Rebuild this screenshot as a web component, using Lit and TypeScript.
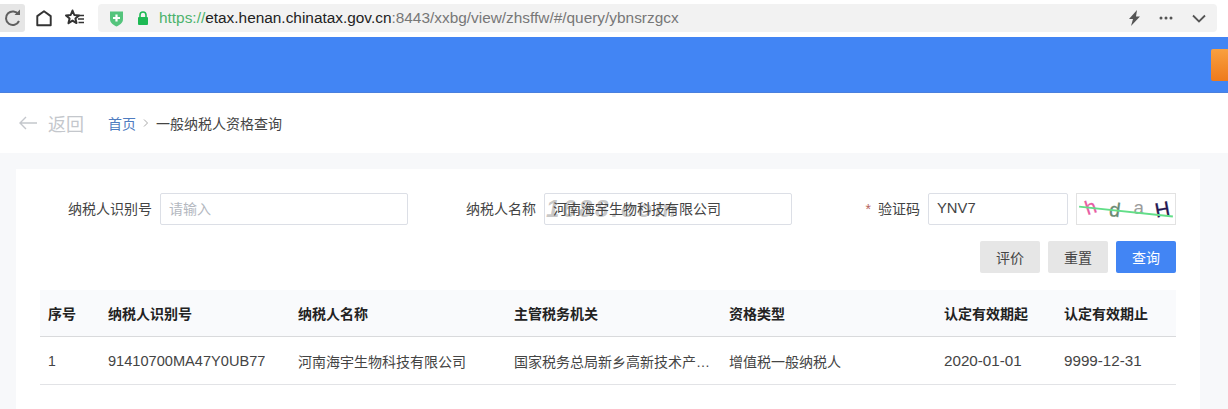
import { LitElement, html, css, svg } from "lit";
import { customElement } from "lit/decorators.js";

const ICON_REFRESH = svg`<path d="M18.500 8.500A6.800 6.800 0 1 0 19 15" fill="none" stroke="#5f5f5f" stroke-width="2"/><path d="M14.500 9h5.500V3.500z" fill="#5f5f5f"/>`;
const ICON_HOME = svg`<path d="M5.500 19.500V10L12.500 5 19.500 10v9.500z" fill="none" stroke="#333" stroke-width="2" stroke-linejoin="round"/>`;
const ICON_STAR = svg`<path d="M9.500 4.500l1.800 4.500 4.700.4-3.600 3.100 1.100 4.600-4-2.500-4 2.500 1.100-4.600L3 9.400l4.700-.4z" fill="none" stroke="#333" stroke-width="2" stroke-linejoin="round"/><path d="M15.500 9.500h5.500M15 13h6M15.500 16.500h5.500" stroke="#333" stroke-width="1.500"/>`;

const COLS = [
  ["序号", "1", ""],
  ["纳税人识别号", "91410700MA47Y0UB77", "id"],
  ["纳税人名称", "河南海宇生物科技有限公司", ""],
  ["主管税务机关", "国家税务总局新乡高新技术产业开发区税务局", ""],
  ["资格类型", "增值税一般纳税人", ""],
  ["认定有效期起", "2020-01-01", "date"],
  ["认定有效期止", "9999-12-31", "date"],
];

@customElement("app-root")
export class AppRoot extends LitElement {
  static styles = css`
    :host { display: block; width: 1228px; height: 409px; overflow: hidden; background: #f7f8fa;
      font-family: "Liberation Sans", "Noto Sans CJK SC", sans-serif; font-size: 14px; color: #333; }
    .chrome { height: 37px; background: #fff; display: flex; align-items: flex-start; padding-top: 4px; box-sizing: border-box; }
    .reload { width: 25px; height: 28px; background: #e6e6e6; border-radius: 0 3px 3px 0; display: flex; align-items: center; justify-content: center; }
    .tool { width: 24px; height: 28px; display: flex; align-items: center; justify-content: center; }
    .home { margin-left: 7px; }
    .star { margin-left: 7px; }
    .url { margin-left: 11px; width: 1119px; height: 28px; background: #f2f2f2; border-radius: 4px; display: flex; align-items: center; box-sizing: border-box; padding-left: 11px; }
    .shield { width: 15px; height: 18px; flex: none; }
    .lock { width: 12px; height: 14px; margin-left: 13px; flex: none; }
    .addr { margin-left: 10px; font-size: 15.400px; white-space: nowrap; color: #777; flex: 1; }
    .addr .s { color: #4cb26c; }
    .addr .d { color: #222; }
    .actions { display: flex; align-items: center; margin-right: 11px; }
    .actions svg { display: block; }
    .bolt { width: 14px; height: 16px; margin-right: 17px; }
    .dots { width: 14px; height: 4px; margin-right: 19px; }
    .chev { width: 14px; height: 9px; }
    .banner { height: 56px; background: #4285f4; display: flex; justify-content: flex-end; align-items: center; box-shadow: inset 0 -1px 0 #4a80de; }
    .orange { width: 17px; height: 32px; background: linear-gradient(#f9a040, #ee7a1c); border-radius: 2px 0 0 2px; }
    .crumbs { height: 60px; background: #fff; display: flex; align-items: center; padding-left: 18px; }
    .back { display: flex; align-items: center; color: #c4c7cc; font-size: 18px; width: 90px; }
    .back svg { width: 20px; height: 14px; margin-right: 10px; flex: none; }
    .home-link { color: #4f7cc0; font-size: 14px; }
    .sep { margin: 0 7px; width: 6px; height: 8px; flex: none; }
    .cur { font-size: 14px; color: #444; }
    .card { background: #fff; margin: 16px 28px 0 16px; padding: 24px 24px 0; height: 240px; box-sizing: border-box; }
    .form { display: grid; grid-template-columns: repeat(3, 368px); column-gap: 16px; }
    .field { display: flex; align-items: center; height: 32px; }
    .label { width: 112px; padding-right: 8px; text-align: right; font-size: 14px; color: #444; flex: none; margin-top: -2px; }
    .req { color: #b5655f; margin-right: 7px; }
    .input { position: relative; box-sizing: border-box; width: 248px; height: 32px; border: 1px solid #dcdfe6; border-radius: 2px; padding: 0 0 2px 8px; display: flex; align-items: center; font-size: 14px; background: #fff; color: #444; }
    .ph { color: #b4b8bf; }
    .short { width: 140px; font-size: 14.800px; }
    .wm { position: absolute; left: 1px; top: 1px; font: italic bold 24px "Liberation Sans", sans-serif; letter-spacing: 3px; color: rgba(95, 95, 95, .36); white-space: nowrap; line-height: 28px; }
    .text { position: relative; }
    .captcha { width: 100px; height: 32px; box-sizing: border-box; margin-left: 8px; border: 1px solid #e2e2e2; display: block; font-family: "Liberation Sans", sans-serif; }
    .btns { display: flex; justify-content: flex-end; gap: 8px; margin-top: 16px; }
    .btn { width: 60px; height: 32px; border-radius: 2px; background: #e6e6e6; color: #444; font-size: 14px; display: flex; align-items: center; justify-content: center; }
    .btn.pri { background: #4285f4; color: #fff; }
    .table { margin-top: 17px; display: grid; grid-template-columns: 60px 190px 216px 215px 215px 120px 120px; }
    .th, .td { padding-left: 8px; display: flex; align-items: center; box-sizing: border-box; min-width: 0; }
    .th { height: 47px; background: #f9fafc; border-bottom: 1px solid #d9dadc; font-weight: 700; font-size: 14px; color: #222; }
    .td { height: 48px; border-bottom: 1px solid #e2e3e6; font-size: 14px; color: #444; }
    .td span { white-space: nowrap; overflow: hidden; text-overflow: ellipsis; max-width: 197px; }
    .td.id { font-size: 14.600px; }
    .td.date { font-size: 15.200px; }
  `;

  render() {
    return html`
      <div class="chrome">
        <div class="reload"><svg width="25" height="25" viewBox="0 0 25 25">${ICON_REFRESH}</svg></div>
        <div class="tool home"><svg width="25" height="25" viewBox="0 0 25 25">${ICON_HOME}</svg></div>
        <div class="tool star"><svg width="24" height="24" viewBox="0 0 24 24">${ICON_STAR}</svg></div>
        <div class="url">
          <svg class="shield" viewBox="0 0 15 18"><path d="M1 2.500h13v7.500c0 4-3.500 6-6.500 7.500C4.500 16 1 14 1 10z" fill="#54c47c"/><path d="M7.500 5.500v7M4 9h7" stroke="#fff" stroke-width="2.200"/></svg>
          <svg class="lock" viewBox="0 0 12 14"><path d="M3 6V4a3 3 0 0 1 6 0v2" fill="none" stroke="#1db954" stroke-width="1.600"/><rect x="1" y="6" width="10" height="8" rx="1" fill="#1db954"/></svg>
          <div class="addr"><span class="s">https://</span><span class="d">etax.henan.chinatax.gov.cn</span>:8443/xxbg/view/zhsffw/#/query/ybnsrzgcx</div>
          <div class="actions">
            <svg class="bolt" viewBox="0 0 14 16"><path d="M9 0L1 9h4l-2 7 9-9.500H8z" fill="#555"/></svg>
            <svg class="dots" viewBox="0 0 14 4"><circle cx="2" cy="2" r="1.500" fill="#555"/><circle cx="7" cy="2" r="1.500" fill="#555"/><circle cx="12" cy="2" r="1.500" fill="#555"/></svg>
            <svg class="chev" viewBox="0 0 14 9"><path d="M1 1.500l6 6 6-6" fill="none" stroke="#555" stroke-width="1.800"/></svg>
          </div>
        </div>
      </div>
      <div class="banner"><div class="orange"></div></div>
      <div class="crumbs">
        <div class="back"><svg viewBox="0 0 20 14"><path d="M19 7H2M8 1L2 7l6 6" fill="none" stroke="#c4c7cc" stroke-width="1.400"/></svg>返回</div>
        <span class="home-link">首页</span>
        <svg class="sep" viewBox="0 0 6 8"><path d="M1 .5L4.500 4 1 7.500" fill="none" stroke="#a8a8a8"/></svg>
        <span class="cur">一般纳税人资格查询</span>
      </div>
      <div class="card">
        <div class="form">
          <div class="field"><div class="label">纳税人识别号</div><div class="input ph">请输入</div></div>
          <div class="field"><div class="label">纳税人名称</div><div class="input"><span class="wm">1688.com</span><span class="text">河南海宇生物科技有限公司</span></div></div>
          <div class="field">
            <div class="label"><span class="req">*</span>验证码</div>
            <div class="input short">YNV7</div>
            <svg class="captcha" viewBox="0 0 100 32">
              <text x="7" y="21" font-size="21" fill="#e85aa2" stroke="#e85aa2" stroke-width=".3" transform="rotate(-18 13 16)">h</text>
              <text x="32" y="24" font-size="21" fill="#6a8a72" stroke="#6a8a72" stroke-width=".3" transform="rotate(8 38 18)">d</text>
              <text x="58" y="21" font-size="20" fill="#9c9c9c">a</text>
              <text x="81" y="24" font-size="22" fill="#241650" stroke="#241650" stroke-width=".3" transform="rotate(-10 89 18)">H</text>
              <path d="M0 13.500L100 24" stroke="#62de88" stroke-width="2"/>
            </svg>
          </div>
        </div>
        <div class="btns">
          <div class="btn">评价</div><div class="btn">重置</div><div class="btn pri">查询</div>
        </div>
        <div class="table">
          ${COLS.map(c => html`<div class="th">${c[0]}</div>`)}
          ${COLS.map(c => html`<div class="td ${c[2]}"><span>${c[1]}</span></div>`)}
        </div>
      </div>
    `;
  }
}
